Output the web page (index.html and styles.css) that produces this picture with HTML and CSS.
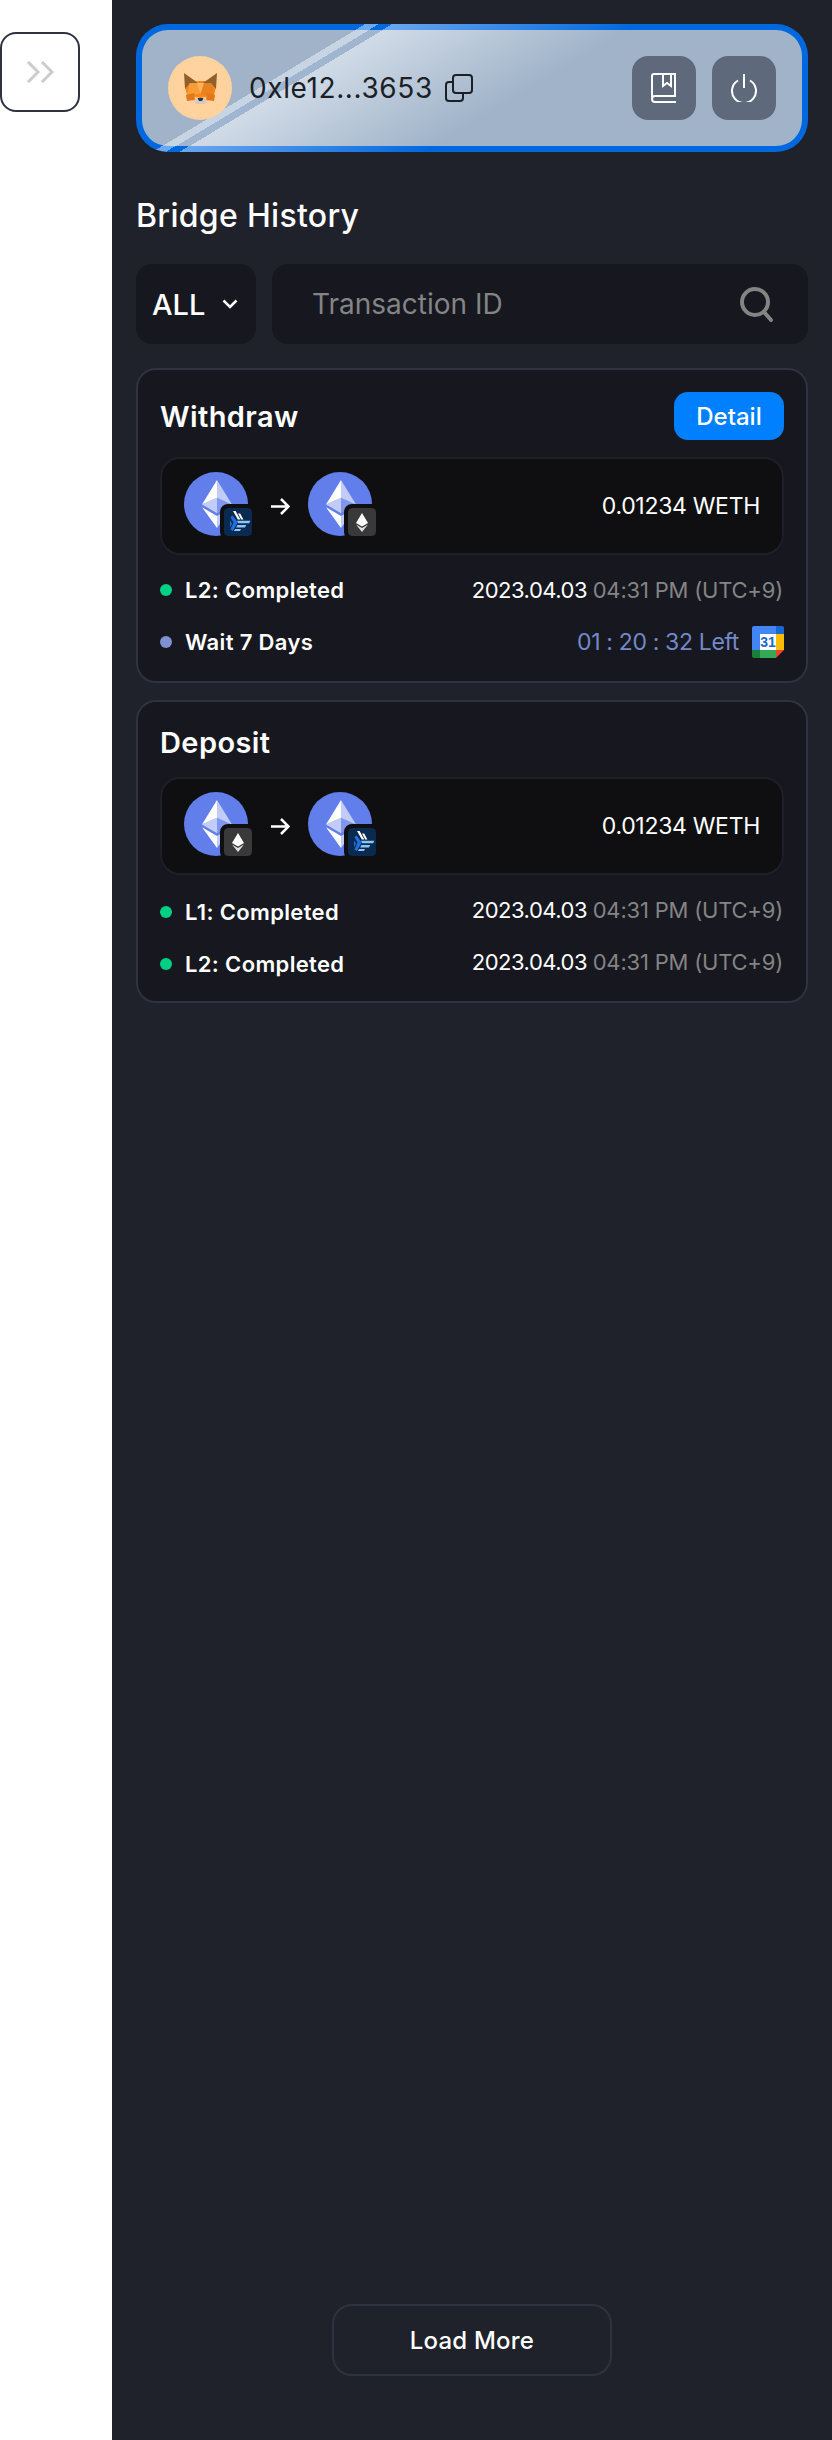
FILE: index.html
```html
<!DOCTYPE html>
<html lang="en">

<head>
    <meta charset="UTF-8">
    <title>Bridge History</title>
    <link rel="stylesheet" href="styles.css">
</head>

<body>
    <svg class="icon-defs" xmlns="http://www.w3.org/2000/svg">
        <symbol id="eth" viewBox="0 0 32 32">
            <circle cx="16" cy="16" r="16" fill="#627EEA" />
            <g fill="#fff">
                <path fill-opacity=".602" d="M16.5 4v8.87l7.5 3.35z" />
                <path d="M16.5 4L9 16.22l7.5-3.35z" />
                <path fill-opacity=".602" d="M16.5 21.97V28L24 17.62z" />
                <path d="M16.5 28v-6.03L9 17.62z" />
                <path fill-opacity=".2" d="M16.5 20.57l7.5-4.35-7.5-3.35z" />
                <path fill-opacity=".602" d="M9 16.22l7.5 4.35v-7.7z" />
            </g>
        </symbol>
        <symbol id="badge-l2" viewBox="0 0 28 28">
            <rect width="28" height="28" rx="4" fill="#0A2A50" />
            <path fill="#fff" d="M9 3h2.600l4.800 8.400h-2.600zM14 5.600h2.200l3.200 5.800h-2.200z" />
            <path fill="#1F6FE0" d="M8.600 7.600l5.200 7-5 8.400-2.400-1.400 3.200-7-3.200-5.400zM6 12.400l2 3-2 4z" />
            <path fill="#8CC4F5" d="M13 12.800h13.400l-1.200 2.400H14.400zM13.400 17h8.800l-1.200 2.400h-8.800zM11 21h6l-1 2H10z" />
        </symbol>
        <symbol id="badge-l1" viewBox="0 0 28 28">
            <rect width="28" height="28" rx="4" fill="#393939" />
            <path fill="#fff" d="M14 5l6 10-6 3.400L8 15z" />
            <path fill="#fff" fill-opacity=".85" d="M8 16.400l6 3.500 6-3.500-6 7.600z" />
        </symbol>
        <symbol id="gcal" viewBox="0 0 32 32">
            <path fill="#4285F4" d="M2 0h22v8H8v16H0V2a2 2 0 0 1 2-2z" />
            <path fill="#1967D2" d="M24 0h6a2 2 0 0 1 2 2v6h-8z" />
            <path fill="#FBBC04" d="M24 8h8v16h-8z" />
            <path fill="#34A853" d="M8 24h16v8H8z" />
            <path fill="#188038" d="M0 24h8v8H2a2 2 0 0 1-2-2z" />
            <path fill="#EA4335" d="M24 24h8l-8 8z" />
            <path fill="#fff" d="M8 8h16v16H8z" />
            <text x="16" y="21" text-anchor="middle" class="gcal-day">31</text>
        </symbol>
    </svg>

    <div class="page">
        <!-- Left rail -->
        <aside class="rail">
            <button class="rail-toggle">
                <svg width="28" height="22" viewBox="0 0 28 22" fill="none" stroke="#ccc" stroke-width="3">
                    <path d="M2 1l10 10L2 21" />
                    <path d="M16 1l10 10-10 10" />
                </svg>
            </button>
        </aside>

        <main class="panel">
            <!-- Wallet card -->
            <div class="wallet">
                <div class="wallet-avatar">
                    <svg width="33" height="31" viewBox="0 0 33 31">
                        <path fill="#F6851B" d="M6 8h21l5 6-2 8-13.500 3L3 22l-2-8z" />
                        <path fill="#F89C35" d="M6 8h8l2.500 13L3 22z" />
                        <path fill="#E8821E" d="M27 8h-8l-2.500 13L30 22z" />
                        <path fill="#8F5F2E" d="M0 0l14 10-8 0-5 6z" />
                        <path fill="#8F5F2E" d="M33 0L19 10l8 0 5 6z" />
                        <path fill="#FFB264" d="M13 10h7l-3.500 11z" />
                        <path fill="#E4761B" d="M2 22l8-2 1 7-8 1zM31 22l-8-2-1 7 8 1z" />
                        <path fill="#D7C9BD" d="M10 27l6.500-2 6.500 2-2 4H12z" />
                        <path fill="#233447" d="M13.500 25h6l-1.500 3h-3z" />
                    </svg>
                </div>
                <span class="wallet-address">0xle12...3653</span>
                <svg class="wallet-copy" width="28" height="28" viewBox="0 0 28 28" fill="none" stroke="#1c1f26" stroke-width="2">
                    <rect x="8" y="1" width="19" height="18" rx="3" />
                    <path d="M8 8H4a3 3 0 0 0-3 3v13a3 3 0 0 0 3 3h11a3 3 0 0 0 3-3v-5" />
                </svg>
                <div class="wallet-actions">
                    <button class="wallet-btn">
                        <svg width="26" height="30" viewBox="0 0 26 30" fill="none" stroke="#fff" stroke-width="2">
                            <path d="M1 24V3a2 2 0 0 1 2-2h21v22H4a3 3 0 0 0-3 3 3 3 0 0 0 3 3h21" />
                            <path d="M12 1v12l4-3 4 3V1" />
                        </svg>
                    </button>
                    <button class="wallet-btn">
                        <svg width="26" height="28" viewBox="0 0 26 28" fill="none" stroke="#fff" stroke-width="2">
                            <path d="M13 0v14" />
                            <path d="M7 6.500a12 12 0 1 0 12 0" />
                        </svg>
                    </button>
                </div>
            </div>

            <h1 class="panel-title">Bridge History</h1>

            <div class="filters">
                <div class="filter-select">
                    <span>ALL</span>
                    <svg width="16" height="10" viewBox="0 0 16 10" fill="none" stroke="#fff" stroke-width="2.500">
                        <path d="M1.500 1.500L8 8l6.500-6.500" />
                    </svg>
                </div>
                <div class="filter-search">
                    <span class="filter-placeholder">Transaction ID</span>
                    <svg width="36" height="36" viewBox="0 0 36 36" fill="none" stroke="#848484" stroke-width="4">
                        <circle cx="16" cy="16" r="13" />
                        <path d="M25 26l7 8" stroke-linecap="round" />
                    </svg>
                </div>
            </div>

            <!-- Withdraw -->
            <section class="tx-card">
                <div class="tx-head">
                    <h2 class="tx-title">Withdraw</h2>
                    <button class="tx-detail">Detail</button>
                </div>
                <div class="tx-route">
                    <div class="token">
                        <svg class="token-eth"><use href="#eth" /></svg>
                        <svg class="token-badge"><use href="#badge-l2" /></svg>
                    </div>
                    <svg class="route-arrow" width="19" height="17" viewBox="0 0 19 17" fill="none" stroke="#fff" stroke-width="2.500">
                        <path d="M0 8.500h17M10 1l7.500 7.500L10 16" />
                    </svg>
                    <div class="token">
                        <svg class="token-eth"><use href="#eth" /></svg>
                        <svg class="token-badge"><use href="#badge-l1" /></svg>
                    </div>
                    <span class="tx-amount">0.01234 WETH</span>
                </div>
                <div class="tx-rows tx-rows-wait">
                    <div class="tx-row">
                        <span class="dot"></span>
                        <span class="tx-label">L2: Completed</span>
                        <span class="tx-time">2023.04.03 <em>04:31 PM (UTC+9)</em></span>
                    </div>
                    <div class="tx-row">
                        <span class="dot dot-wait"></span>
                        <span class="tx-label">Wait 7 Days</span>
                        <span class="tx-left">01 : 20 : 32 Left</span>
                        <svg class="tx-cal"><use href="#gcal" /></svg>
                    </div>
                </div>
            </section>

            <!-- Deposit -->
            <section class="tx-card">
                <div class="tx-head tx-head-plain">
                    <h2 class="tx-title">Deposit</h2>
                </div>
                <div class="tx-route">
                    <div class="token">
                        <svg class="token-eth"><use href="#eth" /></svg>
                        <svg class="token-badge"><use href="#badge-l1" /></svg>
                    </div>
                    <svg class="route-arrow" width="19" height="17" viewBox="0 0 19 17" fill="none" stroke="#fff" stroke-width="2.500">
                        <path d="M0 8.500h17M10 1l7.500 7.500L10 16" />
                    </svg>
                    <div class="token">
                        <svg class="token-eth"><use href="#eth" /></svg>
                        <svg class="token-badge"><use href="#badge-l2" /></svg>
                    </div>
                    <span class="tx-amount">0.01234 WETH</span>
                </div>
                <div class="tx-rows tx-rows-done">
                    <div class="tx-row">
                        <span class="dot"></span>
                        <span class="tx-label">L1: Completed</span>
                        <span class="tx-time">2023.04.03 <em>04:31 PM (UTC+9)</em></span>
                    </div>
                    <div class="tx-row">
                        <span class="dot"></span>
                        <span class="tx-label">L2: Completed</span>
                        <span class="tx-time">2023.04.03 <em>04:31 PM (UTC+9)</em></span>
                    </div>
                </div>
            </section>

            <button class="load-more">Load More</button>
        </main>
    </div>
</body>

</html>
```

FILE: styles.css
```css
* {
    box-sizing: border-box;
}

body {
    margin: 0;
    background-color: #fff;
    font-family: Inter, "Liberation Sans", sans-serif;
    color: #fff;
}

button {
    font-family: inherit;
    cursor: pointer;
}

.icon-defs {
    display: none;
}

.gcal-day {
    font-size: 14px;
    font-weight: 700;
    fill: #1967D2;
    font-family: "Liberation Sans", sans-serif;
}

.page {
    display: flex;
    min-height: 2440px;
}

/* Left rail */
.rail {
    width: 112px;
    flex-shrink: 0;
    padding-top: 32px;
}

.rail-toggle {
    display: flex;
    align-items: center;
    justify-content: center;
    width: 80px;
    height: 80px;
    padding: 0;
    background-color: #fff;
    border: 2px solid #2f3240;
    border-radius: 16px;
}

/* Main panel */
.panel {
    flex: 1;
    display: flex;
    flex-direction: column;
    padding: 24px 24px 64px;
    background-color: #1f222a;
}

/* Wallet card */
.wallet {
    display: flex;
    align-items: center;
    height: 128px;
    padding: 0 26px;
    border: 6px solid transparent;
    border-radius: 32px;
    background:
        linear-gradient(149deg, #a0b3c9 110px, #c7d4e3 110px, #c7d4e3 117px, #a0b5cf 117px, #a0b5cf 124px, #d0dbe7 124px, #a0b3c9 250px) padding-box,
        linear-gradient(149deg, #0068df 118px, #6aa8f0 118px, #6aa8f0 125px, #0068df 125px, #0068df 132px, #69a6ef 132px, #0068df 258px) border-box;
}

.wallet-avatar {
    display: flex;
    align-items: center;
    justify-content: center;
    width: 64px;
    height: 64px;
    border-radius: 50%;
    background-color: #ffd29e;
}

.wallet-address {
    margin-left: 17px;
    font-size: 28px;
    letter-spacing: 0.6px;
    color: #1c1f26;
}

.wallet-copy {
    margin-left: 12px;
}

.wallet-actions {
    display: flex;
    gap: 16px;
    margin-left: auto;
}

.wallet-btn {
    display: flex;
    align-items: center;
    justify-content: center;
    width: 64px;
    height: 64px;
    padding: 0;
    border: none;
    border-radius: 16px;
    background-color: #5e6a7c;
}

.panel-title {
    margin: 40px 0 24px;
    font-size: 32px;
    line-height: 48px;
    font-weight: 500;
    letter-spacing: 0.3px;
}

/* Filters */
.filters {
    display: flex;
    gap: 16px;
    height: 80px;
}

.filter-select {
    display: flex;
    align-items: center;
    justify-content: space-between;
    width: 120px;
    padding: 0 18px 0 16px;
    border-radius: 16px;
    background-color: #16171f;
    font-size: 29px;
    font-weight: 500;
}

.filter-search {
    flex: 1;
    display: flex;
    align-items: center;
    justify-content: space-between;
    padding: 0 33px 0 40px;
    border-radius: 16px;
    background-color: #16171f;
}

.filter-placeholder {
    font-size: 28px;
    color: #848484;
}

/* Transaction cards */
.tx-card {
    margin-top: 24px;
    padding: 22px 22px 0;
    border: 2px solid #2f3240;
    border-radius: 20px;
    background-color: #16171f;
}

.tx-card + .tx-card {
    margin-top: 17px;
}

.tx-head {
    display: flex;
    align-items: center;
    justify-content: space-between;
    height: 48px;
}

.tx-head-plain {
    height: 36px;
}

.tx-title {
    margin: 0;
    font-size: 29px;
    font-weight: 600;
    letter-spacing: 0.4px;
}

.tx-detail {
    width: 110px;
    height: 48px;
    padding: 0;
    border: none;
    border-radius: 14px;
    background-color: #007fff;
    color: #fff;
    font-size: 24px;
    font-weight: 500;
}

.tx-route {
    display: flex;
    align-items: center;
    height: 98px;
    margin-top: 17px;
    padding: 0 22px;
    border: 2px solid #1e2028;
    border-radius: 20px;
    background-color: #0f0f11;
}

.token {
    position: relative;
    width: 64px;
    height: 64px;
    margin-bottom: 4px;
}

.token-eth {
    display: block;
    width: 64px;
    height: 64px;
}

/* badge sits over the corner of the coin */
.token-badge {
    position: absolute;
    right: -4px;
    bottom: 0;
    width: 28px;
    height: 28px;
    box-sizing: content-box;
    margin: -4px;
    border: 4px solid #0f0f11;
    border-radius: 8px;
    background-color: #0f0f11;
}

.route-arrow {
    margin: 0 18px 0 23px;
}

.tx-amount {
    margin-left: auto;
    font-size: 23px;
    letter-spacing: -0.3px;
}

.tx-rows {
    display: flex;
    flex-direction: column;
    gap: 20px;
    margin: 21px 0;
}

.tx-rows-wait {
    margin: 19px 0 23px;
}

.tx-row {
    display: flex;
    align-items: center;
    height: 32px;
}

.tx-rows-done .tx-time {
    margin-bottom: 4px;
}

.dot {
    width: 12px;
    height: 12px;
    margin-right: 13px;
    border-radius: 50%;
    background-color: #00d084;
}

.dot-wait {
    background-color: #7f91d1;
}

.tx-label {
    font-size: 22px;
    font-weight: 600;
    letter-spacing: 0.35px;
}

.tx-time {
    margin-left: auto;
    margin-right: 1px;
    font-size: 22px;
    letter-spacing: -0.5px;
    white-space: nowrap;
}

.tx-time em {
    font-style: normal;
    letter-spacing: -0.2px;
    color: #848484;
}

.tx-left {
    margin-left: auto;
    font-size: 23px;
    letter-spacing: -0.35px;
    color: #7389c9;
}

.tx-cal {
    width: 32px;
    height: 32px;
    margin-left: 13px;
}

.load-more {
    align-self: center;
    width: 280px;
    height: 72px;
    margin-top: auto;
    padding: 0;
    border: 2px solid #2f3240;
    border-radius: 20px;
    background-color: transparent;
    color: #fff;
    font-size: 24px;
    font-weight: 500;
    letter-spacing: 0.2px;
}
```
